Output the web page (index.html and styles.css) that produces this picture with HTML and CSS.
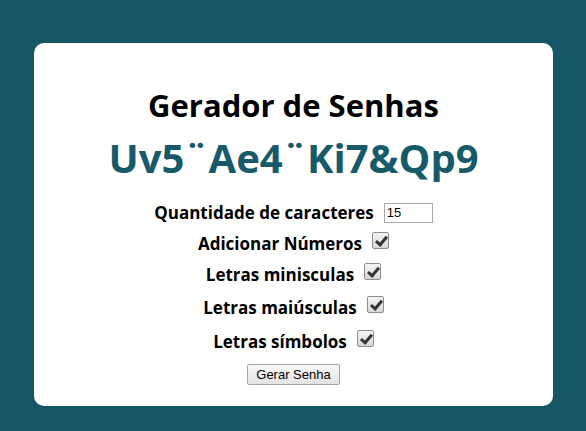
FILE: index.html
```html
<!DOCTYPE html>
<html lang="pt">
<head>
<meta charset="utf-8">
<title>Gerador de Senhas</title>
<link rel="stylesheet" href="styles.css">
</head>
<body>
<main class="card">
  <h1 class="title">Gerador de Senhas</h1>
  <h2 class="password">Uv5¨Ae4¨Ki7&amp;Qp9</h2>
  <form class="options">
    <div class="row">
      <label class="label" for="qty">Quantidade de caracteres</label>
      <input class="qty" id="qty" type="text" value="15">
    </div>
    <div class="row">
      <label class="label" for="num">Adicionar Números</label>
      <input class="check" id="num" type="checkbox" checked>
    </div>
    <div class="row">
      <label class="label" for="min">Letras minisculas</label>
      <input class="check" id="min" type="checkbox" checked>
    </div>
    <div class="row row-mid">
      <label class="label" for="mai">Letras maiúsculas</label>
      <input class="check" id="mai" type="checkbox" checked>
    </div>
    <div class="row row-last">
      <label class="label" for="sim">Letras símbolos</label>
      <input class="check" id="sim" type="checkbox" checked>
    </div>
    <div class="row row-btn">
      <button class="btn" type="button">Gerar Senha</button>
    </div>
  </form>
</main>
</body>
</html>
```
FILE: styles.css
```css
html, body {
  margin: 0;
  padding: 0;
}
body {
  background: #145665;
  font-family: "Open Sans", "DejaVu Sans", sans-serif;
  padding: 43px 33px 25px 34px;
}
.card {
  background: #ffffff;
  border-radius: 10px;
  height: 363px;
  box-sizing: border-box;
  padding-top: 42px;
  display: flex;
  flex-direction: column;
  align-items: center;
}
.title {
  margin: 0;
  font-size: 31px;
  font-weight: 700;
  line-height: 40px;
  color: #000;
}
.password {
  margin: 0;
  margin-top: 6px;
  font-size: 40px;
  font-weight: 700;
  line-height: 54px;
  color: #175a69;
}
.options {
  margin-top: 12px;
  display: flex;
  flex-direction: column;
  align-items: center;
}
.row {
  display: flex;
  align-items: center;
  gap: 10px;
  height: 31px;
}
.row-mid {
  margin-top: 2px;
}
.row-last {
  height: 34px;
  margin-top: 1px;
}
.label {
  font-size: 17px;
  font-weight: 700;
  color: #000;
}
.qty {
  box-sizing: border-box;
  width: 49px;
  height: 20px;
  padding: 1px 2px;
  border: 1px solid #a9a9a9;
  border-radius: 0;
  font-family: "Liberation Sans", Arial, sans-serif;
  font-size: 13px;
  color: #000;
  outline: none;
}
.check {
  appearance: none;
  -webkit-appearance: none;
  margin: 0 0 6px 0;
  width: 17px;
  height: 17px;
  box-sizing: border-box;
  border: 1px solid #8f8f8f;
  border-radius: 2px;
  background: linear-gradient(#f4f4f4, #d8d8d8);
  position: relative;
}
.check:checked::after {
  content: "";
  position: absolute;
  left: 5px;
  top: 1px;
  width: 4px;
  height: 9px;
  border: solid #333;
  border-width: 0 3px 3px 0;
  transform: rotate(40deg);
}
.row-btn {
  margin-top: 1px;
}
.btn {
  font-family: "Liberation Sans", Arial, sans-serif;
  font-size: 13px;
  color: #000;
  background: linear-gradient(#f8f8f8, #e3e3e3);
  border: 1px solid #a6a6a6;
  border-radius: 2px;
  padding: 1px 7px;
  height: 21px;
  width: 93px;
}
```
